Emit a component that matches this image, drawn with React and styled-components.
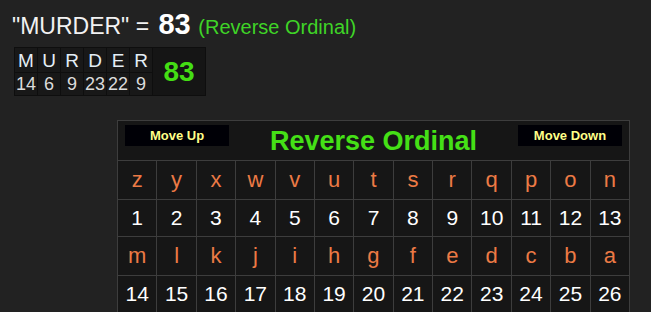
import React from "react";
import styled, { createGlobalStyle } from "styled-components";

const Global = createGlobalStyle`
  html, body { margin: 0; padding: 0; background: #222222; }
  body { font-family: "Liberation Sans", Arial, sans-serif; color: #fff; }
`;

const Page = styled.div`
  padding: 10px 0 0 12px;
`;

const Headline = styled.div`
  display: flex;
  align-items: baseline;
  line-height: 1;
  white-space: pre;
  color: #f2f2f2;
`;

const Word = styled.span`
  font-size: 23px;
  margin-right: 3px;
`;

const Total = styled.span`
  font-size: 29px;
  font-weight: bold;
  color: #ffffff;
`;

const Cipher = styled.span`
  font-size: 20px;
  color: #3fd427;
  margin-left: 2px;
`;

const Summary = styled.div`
  display: inline-flex;
  margin: 8px 0 0 2px;
  background: #0e0e0e;
  padding: 1px;
  gap: 1px;
`;

const LetterGrid = styled.div`
  display: grid;
  grid-template-columns: repeat(6, 22px);
  grid-template-rows: 24px 22px;
  gap: 1px;
`;

const SumCell = styled.div`
  background: #181818;
  display: flex;
  align-items: center;
  justify-content: center;
  font-size: ${(p) => (p.$top ? "19px" : "18px")};
  color: ${(p) => (p.$top ? "#e4eef6" : "#dcdcdc")};
  line-height: 1;
`;

const SumTotal = styled.div`
  width: 52px;
  background: #151515;
  display: flex;
  align-items: center;
  justify-content: center;
  color: #44dd14;
  font-weight: bold;
  font-size: 28px;
`;

const Board = styled.div`
  margin: 24px 0 0 105px;
  width: 511px;
  border: 1px solid #3d3d3d;
  background: #3d3d3d;
  display: grid;
  grid-template-columns: repeat(13, 1fr);
  gap: 1px;
`;

const BoardHead = styled.div`
  grid-column: 1 / -1;
  height: 39px;
  background: #161616;
  display: flex;
  align-items: flex-start;
  justify-content: space-between;
  padding: 4px 7px 0 7px;
  box-sizing: border-box;
`;

const MoveButton = styled.div`
  width: 104px;
  height: 21px;
  background: #000006;
  color: #ffff88;
  font-weight: bold;
  font-size: 13px;
  display: flex;
  align-items: center;
  justify-content: center;
`;

const BoardTitle = styled.div`
  color: #45e016;
  font-weight: bold;
  font-size: 27px;
  line-height: 1;
  margin-top: 3px;
`;

const Cell = styled.div`
  background: #161616;
  height: ${(p) => (p.$letter ? "38px" : "36px")};
  display: flex;
  align-items: center;
  justify-content: center;
  font-size: ${(p) => (p.$letter ? "22px" : "21px")};
  color: ${(p) => (p.$letter ? "#ec7a45" : "#ffffff")};
`;

const word = "MURDER";
const alphabet = "abcdefghijklmnopqrstuvwxyz";
const rev = (ch) => 27 - (alphabet.indexOf(ch.toLowerCase()) + 1);

export default function App() {
  const letters = alphabet.split("").reverse();
  const rows = [letters.slice(0, 13), letters.slice(13)];
  return (
    <>
      <Global />
      <Page>
        <Headline>
          <Word>"MURDER" = </Word>
          <Total>83</Total>
          <Cipher> (Reverse Ordinal)</Cipher>
        </Headline>
        <Summary>
          <LetterGrid>
            {word.split("").map((c, i) => (
              <SumCell key={"l" + i} $top>
                {c}
              </SumCell>
            ))}
            {word.split("").map((c, i) => (
              <SumCell key={"n" + i}>{rev(c)}</SumCell>
            ))}
          </LetterGrid>
          <SumTotal>83</SumTotal>
        </Summary>
        <Board>
          <BoardHead>
            <MoveButton>Move Up</MoveButton>
            <BoardTitle>Reverse Ordinal</BoardTitle>
            <MoveButton>Move Down</MoveButton>
          </BoardHead>
          {rows.map((row, r) => (
            <React.Fragment key={r}>
              {row.map((c) => (
                <Cell key={c} $letter>
                  {c}
                </Cell>
              ))}
              {row.map((c) => (
                <Cell key={c + "n"}>{rev(c)}</Cell>
              ))}
            </React.Fragment>
          ))}
        </Board>
      </Page>
    </>
  );
}
